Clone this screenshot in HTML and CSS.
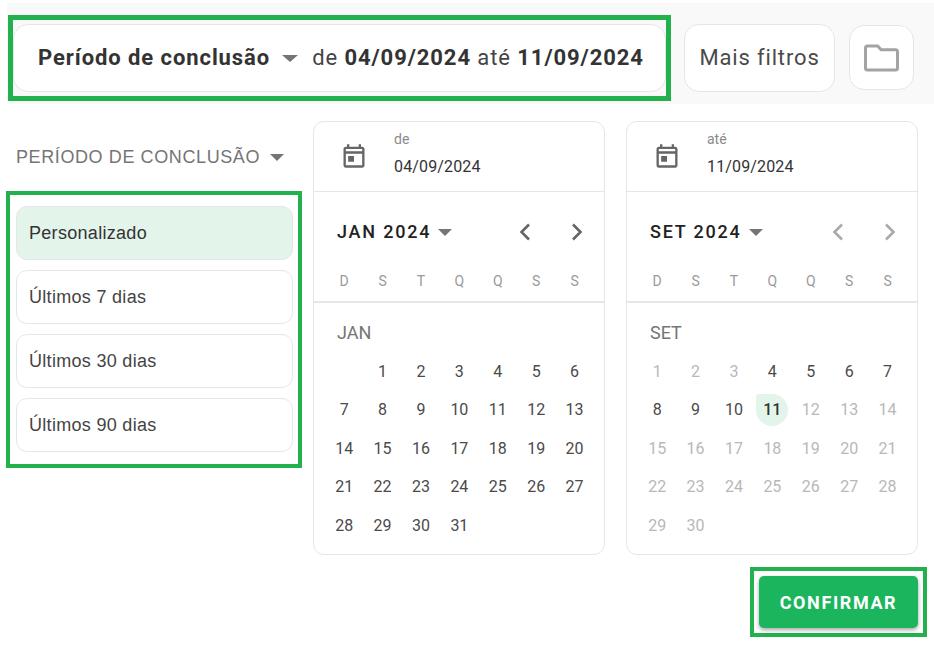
FILE: index.html
```html
<!DOCTYPE html>
<html>
    <head>
        <meta charset="UTF-8">
        <title>Filtros</title>
        <link rel="stylesheet" href="styles.css">
    </head>
    <body>
        <div class="topBar">
            <div class="markTop">
                <div class="periodPill">
                    <b>Período de conclusão</b>
                    <span class="caret caretPill"></span>
                    <span>de <b>04/09/2024</b> até <b>11/09/2024</b></span>
                </div>
            </div>
            <button class="moreBtn">Mais filtros</button>
            <button class="folderBtn">
                <svg width="36" height="30" viewBox="0 0 36 30"><path d="M3.5 3h10.2l3.4 3.8h14.4c1.2 0 2 .8 2 2v16.2c0 1.2-.8 2-2 2H3.500c-1.200 0-2-.8-2-2V5c0-1.200.8-2 2-2z" fill="none" stroke="#a3a3a3" stroke-width="3"/></svg>
            </button>
        </div>

        <div class="mainRow">
            <div class="leftCol">
                <div class="periodTitle">PERÍODO DE CONCLUSÃO <span class="caret caretTitle"></span></div>
                <div class="markList">
                    <div class="option selected">Personalizado</div>
                    <div class="option">Últimos 7 dias</div>
                    <div class="option">Últimos 30 dias</div>
                    <div class="option">Últimos 90 dias</div>
                </div>
            </div>

            <div class="calendar">
                <div class="dateHead">
                    <svg class="calIcon" width="28" height="28" viewBox="0 0 24 24"><path fill="#666" d="M19 4h-1V2h-2v2H8V2H6v2H5c-1.100 0-2 .9-2 2v14c0 1.100.9 2 2 2h14c1.100 0 2-.9 2-2V6c0-1.100-.9-2-2-2zm0 16H5V10h14v10zM5 8V6h14v2H5zm2 4h5v5H7z"/></svg>
                    <div>
                        <div class="dateLabel">de</div>
                        <div class="dateValue">04/09/2024</div>
                    </div>
                </div>
                <div class="monthRow">
                    <span class="monthName">JAN 2024</span>
                    <span class="caret caretMonth"></span>
                    <span class="navs">
                        <svg width="26" height="26" viewBox="0 0 26 26"><path d="M17 5.500 9.500 13l7.500 7.500" fill="none" stroke="#666" stroke-width="2.600"/></svg>
                        <svg width="26" height="26" viewBox="0 0 26 26"><path d="M9 5.500l7.500 7.500L9 20.500" fill="none" stroke="#666" stroke-width="2.600"/></svg>
                    </span>
                </div>
                <div class="week"><span>D</span><span>S</span><span>T</span><span>Q</span><span>Q</span><span>S</span><span>S</span></div>
                <div class="monthLabel">JAN</div>
                <div class="days">
                    <span></span><span>1</span><span>2</span><span>3</span><span>4</span><span>5</span><span>6</span>
                    <span>7</span><span>8</span><span>9</span><span>10</span><span>11</span><span>12</span><span>13</span>
                    <span>14</span><span>15</span><span>16</span><span>17</span><span>18</span><span>19</span><span>20</span>
                    <span>21</span><span>22</span><span>23</span><span>24</span><span>25</span><span>26</span><span>27</span>
                    <span>28</span><span>29</span><span>30</span><span>31</span>
                </div>
            </div>

            <div class="calendar">
                <div class="dateHead">
                    <svg class="calIcon" width="28" height="28" viewBox="0 0 24 24"><path fill="#666" d="M19 4h-1V2h-2v2H8V2H6v2H5c-1.100 0-2 .9-2 2v14c0 1.100.9 2 2 2h14c1.100 0 2-.9 2-2V6c0-1.100-.9-2-2-2zm0 16H5V10h14v10zM5 8V6h14v2H5zm2 4h5v5H7z"/></svg>
                    <div>
                        <div class="dateLabel">até</div>
                        <div class="dateValue">11/09/2024</div>
                    </div>
                </div>
                <div class="monthRow">
                    <span class="monthName">SET 2024</span>
                    <span class="caret caretMonth"></span>
                    <span class="navs">
                        <svg width="26" height="26" viewBox="0 0 26 26"><path d="M17 5.500 9.500 13l7.500 7.500" fill="none" stroke="#aaa" stroke-width="2.600"/></svg>
                        <svg width="26" height="26" viewBox="0 0 26 26"><path d="M9 5.500l7.500 7.500L9 20.500" fill="none" stroke="#aaa" stroke-width="2.600"/></svg>
                    </span>
                </div>
                <div class="week"><span>D</span><span>S</span><span>T</span><span>Q</span><span>Q</span><span>S</span><span>S</span></div>
                <div class="monthLabel">SET</div>
                <div class="days">
                    <span class="off">1</span><span class="off">2</span><span class="off">3</span><span>4</span><span>5</span><span>6</span><span>7</span>
                    <span>8</span><span>9</span><span>10</span><span class="today">11</span><span class="off">12</span><span class="off">13</span><span class="off">14</span>
                    <span class="off">15</span><span class="off">16</span><span class="off">17</span><span class="off">18</span><span class="off">19</span><span class="off">20</span><span class="off">21</span>
                    <span class="off">22</span><span class="off">23</span><span class="off">24</span><span class="off">25</span><span class="off">26</span><span class="off">27</span><span class="off">28</span>
                    <span class="off">29</span><span class="off">30</span>
                </div>
            </div>
        </div>

        <div class="bottomRow">
            <div class="markConfirm">
                <button class="confirmBtn">CONFIRMAR</button>
            </div>
        </div>
    </body>
</html>
```

FILE: styles.css
```css
* { box-sizing: border-box; }

html, body {
    background: #fff;
    width: 100%; height: 100%;
    margin: 0; padding: 0;
    overflow: hidden;
    font-family: Roboto, sans-serif;
    color: #333; }

button {
    font-family: inherit;
    background: #fff;
    cursor: pointer; }

.caret {
    display: inline-block;
    width: 0; height: 0;
    border-left: 7px solid transparent;
    border-right: 7px solid transparent;
    border-top: 7px solid #757575; }

/* top bar */
.topBar {
    display: flex;
    align-items: flex-start;
    height: 101px;
    margin-top: 3px;
    margin-left: 7px;
    padding-top: 12px;
    padding-left: 1px;
    background: #f9f9f9; }
.markTop {
    flex: none;
    width: 663px; height: 86px;
    padding: 4px 0 4px 0;
    border: 5px solid #22b14c; }
.periodPill {
    display: flex;
    align-items: center;
    height: 68px;
    padding-left: 24px;
    padding-bottom: 2px;
    background: #fff;
    border: 1px solid #e6e6e6;
    border-radius: 15px;
    font-size: 22px;
    letter-spacing: .92px;
    color: #444;
    white-space: nowrap; }
.periodPill b { font-weight: 700; color: #333; }
.caretPill { margin: 2px 14px 0 12px; border-left-width: 8px; border-right-width: 8px; }
.moreBtn {
    flex: none;
    width: 151px; height: 68px;
    margin-top: 9px; margin-left: 13px;
    padding: 0 0 2px;
    border: 1px solid #e6e6e6;
    border-radius: 15px;
    font-size: 22px;
    letter-spacing: .85px;
    color: #4a4a4a; }
.folderBtn {
    flex: none;
    display: flex;
    align-items: center;
    justify-content: center;
    width: 65px; height: 65px;
    margin-top: 10px; margin-left: 14px;
    padding: 0;
    border: 1px solid #e6e6e6;
    border-radius: 15px; }

/* main area */
.mainRow {
    display: flex;
    align-items: flex-start;
    margin-top: 17px;
    padding-left: 6px; }
.leftCol { flex: none; width: 296px; margin-right: 11px; }
.periodTitle {
    height: 70px;
    padding: 26px 0 0 10px;
    font-family: "Liberation Sans", Arial, sans-serif;
    font-size: 18px;
    line-height: 20px;
    letter-spacing: .6px;
    color: #757575;
    white-space: nowrap; }
.caretTitle { margin-left: 4px; vertical-align: 2px; }
.markList {
    display: flex;
    flex-direction: column;
    gap: 10px;
    height: 277px;
    padding: 11px 5px 0 6px;
    border: 4px solid #22b14c; }
.option {
    display: flex;
    align-items: center;
    height: 54px;
    padding-left: 12px;
    border: 1px solid #e6e6e6;
    border-radius: 11px;
    font-family: "Liberation Sans", Arial, sans-serif;
    font-size: 18px;
    letter-spacing: .3px;
    color: #444; }
.option.selected { background: #e3f4ea; color: #333; }

/* calendars */
.calendar {
    flex: none;
    width: 292px; height: 434px;
    margin-right: 21px;
    background: #fff;
    border: 1px solid #e6e6e6;
    border-radius: 11px; }
.calendar:last-child { margin-right: 0; }
.dateHead {
    display: flex;
    height: 70px;
    padding-left: 26px;
    border-bottom: 1px solid #e6e6e6; }
.calIcon { margin-top: 20px; margin-right: 26px; }
.dateLabel {
    margin-top: 9px;
    font-size: 14px;
    line-height: 16px;
    color: #8a8a8a; }
.dateValue {
    margin-top: 10px;
    font-size: 16px;
    line-height: 20px;
    letter-spacing: .15px;
    color: #333; }
.monthRow {
    display: flex;
    align-items: center;
    height: 79px;
    padding-left: 23px;
    padding-right: 14px; }
.monthName {
    font-size: 18px;
    font-weight: 500;
    letter-spacing: 1.8px;
    color: #222; }
.caretMonth { margin-left: 7px; margin-top: 1px; }
.navs {
    display: flex;
    gap: 26px;
    margin-left: auto; }
.week {
    display: grid;
    grid-template-columns: repeat(7, 38.4px);
    align-items: center;
    height: 32px;
    padding-left: 11px;
    border-bottom: 2px solid #e6e6e6;
    padding-bottom: 10px;
    font-size: 14px;
    text-align: center;
    color: #9a9a9a; }
.monthLabel {
    height: 40px;
    padding: 19px 0 0 23px;
    font-size: 18px;
    line-height: 22px;
    color: #757575; }
.days {
    display: grid;
    grid-template-columns: repeat(7, 38.4px);
    grid-auto-rows: 38.4px;
    margin-top: 9.3px;
    padding-left: 11px;
    font-size: 16px;
    color: #4a4a4a; }
.days span {
    display: flex;
    align-items: center;
    justify-content: center; }
.days .off { color: #b8b8b8; }
.days .today {
    justify-self: center;
    align-self: center;
    width: 32px; height: 32px;
    border-radius: 3px 50% 50% 50%;
    background: #e3f4ea;
    font-weight: 500;
    color: #333; }

/* confirm */
.bottomRow {
    display: flex;
    justify-content: flex-end;
    margin-top: 12px;
    padding-right: 7px; }
.markConfirm {
    width: 177px; height: 70px;
    padding: 5px 5px 0 5px;
    border: 4px solid #22b14c; }
.confirmBtn {
    display: block;
    width: 159px; height: 52px;
    border: none;
    border-radius: 5px;
    background: #1ab55c;
    box-shadow: 0 2px 4px rgba(0,0,0,.35);
    font-size: 18px;
    font-weight: 700;
    letter-spacing: 1.6px;
    color: #fff; }
```
